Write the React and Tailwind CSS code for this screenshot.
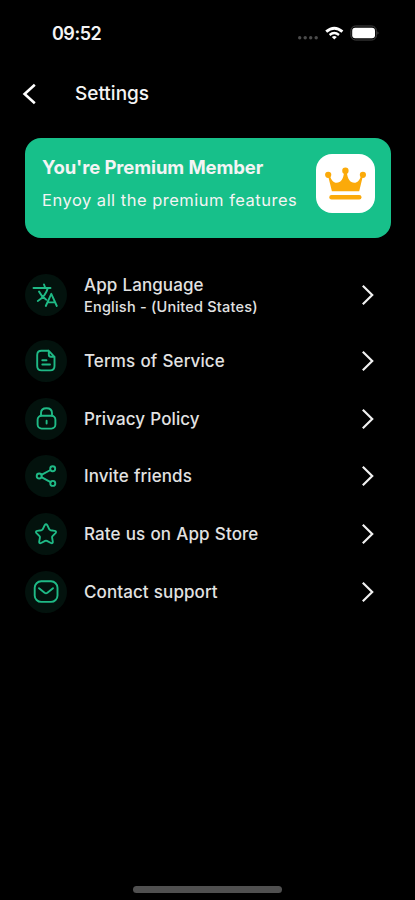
import React from 'react';

const ICONS = {
  language: (
    <>
      <path d="M8.5 14H25.5M19 10.5L20.3 14M22.8 14C21.6 19 17.5 24 12.8 27M14 17.5C15.6 20.8 18.2 23.8 21.3 25.8" />
      <path d="M20.8 32L26.3 19.8L31.8 32M22.6 28.4H30" />
    </>
  ),
  terms: (
    <>
      <path d="M23.5 10.8H16.5Q12.2 10.8 12.2 15V26Q12.2 30.4 16.5 30.4H25.2Q29.5 30.4 29.5 26V16.8L23.8 10.8V14.5Q23.8 16.8 26 16.8H29.3" />
      <path d="M17.3 20.3H21.5M17.3 24.5H25" />
    </>
  ),
  privacy: (
    <>
      <rect x="12.6" y="17.8" width="17.8" height="12.8" rx="4" />
      <path d="M16 17.5V15.2C16 12 18.2 10.2 21.5 10.2S27 12 27 15.2V17.5M21.6 22.7V25.5" />
    </>
  ),
  invite: (
    <>
      <circle cx="27.7" cy="13.8" r="2.5" />
      <circle cx="14.2" cy="21" r="2.5" />
      <circle cx="27.8" cy="28.4" r="2.5" />
      <path d="M16.4 19.8L25.5 15M16.4 22.2L25.6 27.2" />
    </>
  ),
  rate: (
    <path d="M19.7 12.2Q21 10.4 22.3 12.2L24.3 16.3Q24.7 17 25.5 17.2L29.8 17.9Q31.9 18.4 30.5 20.1L27.5 23.2Q26.9 23.8 27.1 24.7L27.8 28.6Q28 30.9 25.9 30L21.9 27.9Q21 27.5 20.1 27.9L16.1 30Q14 30.9 14.2 28.6L14.9 24.7Q15.1 23.8 14.5 23.2L11.5 20.1Q10.1 18.4 12.2 17.9L16.5 17.2Q17.3 17 17.7 16.3Z" />
  ),
  contact: (
    <>
      <rect x="9.7" y="10.3" width="22.8" height="20.6" rx="6.5" />
      <path d="M14 17.2L19.6 21.8Q21 22.8 22.4 21.8L28 17.2" />
    </>
  ),
};

const ITEMS = [
  { icon: 'terms', label: 'Terms of Service' },
  { icon: 'privacy', label: 'Privacy Policy' },
  { icon: 'invite', label: 'Invite friends' },
  { icon: 'rate', label: 'Rate us on App Store' },
  { icon: 'contact', label: 'Contact support' },
];

function StatusBar() {
  return (
    <div className="flex h-[66px] items-center justify-between pl-[52px] pr-[35px]">
      <div className="pt-0.5 text-[18px] leading-6 font-semibold tracking-[-0.5px]">09:52</div>
      <svg width="84" height="20" viewBox="0 0 84 20" fill="none">
        <g fill="#4b4b4b">
          <circle cx="3.7" cy="14.8" r="1.7" />
          <circle cx="9.2" cy="14.8" r="1.7" />
          <circle cx="14.7" cy="14.8" r="1.7" />
          <circle cx="20.2" cy="14.8" r="1.7" />
        </g>
        <g stroke="#fff" strokeWidth="2.9">
          <path d="M30.2 8.6Q38.3 1.8 46.4 8.6" />
          <path d="M33.6 12Q38.3 8 43 12" strokeWidth="2.3" />
        </g>
        <path d="M35.8 14Q38.3 12.2 40.8 14L38.3 16.5Z" fill="#fff" />
        <rect x="54.9" y="3" width="25.4" height="14" rx="4.5" stroke="#444" strokeWidth="1" />
        <rect x="56.2" y="4.8" width="22.8" height="10.5" rx="3" fill="#fff" />
        <path d="M81.6 8.2Q83.4 10 81.6 11.8Z" fill="#666" />
      </svg>
    </div>
  );
}

function Crown() {
  return (
    <div className="h-[59px] w-[59px] rounded-[16px] bg-white">
      <svg viewBox="0 0 59 59" fill="#fbaa0a">
        <circle cx="12.2" cy="20.8" r="3.1" />
        <circle cx="29.4" cy="16.8" r="3.2" />
        <circle cx="46.9" cy="20.8" r="3.1" />
        <path d="M12 21.5L14.2 22.5C15.3 26 17.5 28.8 20.5 28.8C25 28.8 27.4 24.8 28 18.5H30.9C31.5 24.8 34 28.8 38.4 28.8C41.5 28.8 43.7 26 44.8 22.5L47 21.5L43.2 37.3H15.9Z" />
        <rect x="13.3" y="40.9" width="32.2" height="4.5" rx="2.2" />
      </svg>
    </div>
  );
}

function SettingsRow({ icon, label, detail }) {
  return (
    <div className="flex h-[42px] items-center">
      <div className="h-[42px] w-[42px] rounded-full bg-[#03120d]">
        <svg
          viewBox="0 0 42 42"
          fill="none"
          stroke="#1fba86"
          strokeWidth="1.9"
          strokeLinecap="round"
          strokeLinejoin="round"
        >
          {ICONS[icon]}
        </svg>
      </div>
      <div className="flex-1 pt-px pl-[17px]">
        <div className="text-[17px] leading-[23px] font-medium tracking-[0.08px] text-[#e2e2e2] [word-spacing:0.6px]">
          {label}
        </div>
        {detail && (
          <div className="text-[14.5px] leading-5 font-medium tracking-[0.22px] text-[#e2e2e2]">{detail}</div>
        )}
      </div>
      <svg width="14" height="22" viewBox="0 0 14 22" fill="none" stroke="#f0f0f0" strokeWidth="2.2">
        <path d="M1.8 1.8L11.2 11L1.8 20.2" />
      </svg>
    </div>
  );
}

export default function App() {
  return (
    <div className="flex h-[900px] w-full flex-col bg-black font-['Inter',sans-serif] text-[#f4f4f4]">
      <StatusBar />
      <div className="flex h-[55px] items-center pl-[21px]">
        <svg width="18" height="24" viewBox="0 0 18 24" fill="none" stroke="#fff" strokeWidth="2.6">
          <path d="M13.8 2.8L3.6 12L13.8 21.2" />
        </svg>
        <h1 className="pt-px pl-9 text-[19px] leading-6 font-medium">Settings</h1>
      </div>
      <div className="mr-6 ml-[25px] mt-[17px] flex h-[100px] justify-between rounded-[16px] bg-[#17c08a] pr-4 pl-[17px]">
        <div className="pt-[17px]">
          <div className="text-[18.5px] leading-6 font-bold tracking-[-0.1px]">You're Premium Member</div>
          <div className="pt-[9px] text-[16.5px] leading-6 tracking-[0.5px]">Enyoy all the premium features</div>
        </div>
        <div className="pt-4">
          <Crown />
        </div>
      </div>
      <div className="flex flex-col pt-9 pr-10 pl-[25px]">
        <SettingsRow icon="language" label="App Language" detail="English - (United States)" />
        <div className="flex flex-col gap-[15.7px] pt-6">
          {ITEMS.map((item) => (
            <SettingsRow key={item.icon} icon={item.icon} label={item.label} />
          ))}
        </div>
      </div>
      <div className="mt-auto flex justify-center pb-[7px]">
        <div className="h-[7px] w-[149px] rounded-full bg-[#505050]" />
      </div>
    </div>
  );
}
